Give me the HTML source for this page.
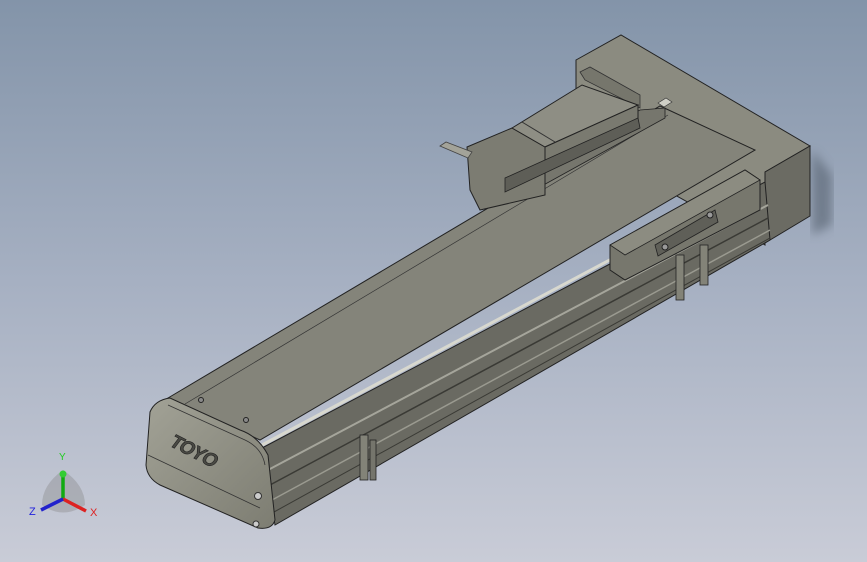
<!DOCTYPE html>
<html><head><meta charset="utf-8"><style>
html,body{margin:0;padding:0;width:867px;height:562px;overflow:hidden}
body{background:linear-gradient(to bottom,#8394a9 0%,#a6b0c2 50%,#c9ccd7 100%)}
svg{position:absolute;left:0;top:0}
</style></head><body>
<svg width="867" height="562" viewBox="0 0 867 562" font-family="Liberation Sans, sans-serif">
<defs>
<filter id="sh"><feGaussianBlur stdDeviation="5"/></filter>
<linearGradient id="cap" x1="0" y1="0" x2="1" y2="1"><stop offset="0" stop-color="#a2a296"/><stop offset="1" stop-color="#7d7d72"/></linearGradient>
</defs>
<polygon points="812,150 832,175 832,225 812,235" fill="#55606e" opacity="0.6" filter="url(#sh)"/>
<!-- back block -->
<polygon points="576,60 621,35 810,146 765,172 765,245 576,140" fill="#8b8b80" stroke="#222" stroke-width="1"/>
<polygon points="765,172 810,146 810,216 765,243" fill="#6b6b63" stroke="#222" stroke-width="1"/>
<polygon points="580,72 590,67 640,95 640,108 585,80" fill="#76766c" stroke="#333" stroke-width="0.8"/>
<polygon points="658,103 666,98 672,102 664,107" fill="#cfcfc6" stroke="#333" stroke-width="0.6"/>
<circle cx="685" cy="122" r="3" fill="#888" stroke="#222"/>
<circle cx="730" cy="145" r="3" fill="#888" stroke="#222"/>
<!-- main rail top face -->
<polygon points="168,398 660,106 755,150 260,440" fill="#84847a" stroke="#222" stroke-width="1"/>
<line x1="185" y1="404" x2="668" y2="115" stroke="#333" stroke-width="0.7"/>
<!-- motor strip -->
<polygon points="505,180 640,110 665,108 665,118 520,198 505,200" fill="#76766d" stroke="#222" stroke-width="0.8"/>
<!-- motor -->
<polygon points="467,147 512,128 545,147 545,195 480,210 470,190" fill="#7c7c72" stroke="#222" stroke-width="1"/>
<polygon points="512,128 582,85 638,105 545,147" fill="#8e8e84" stroke="#222" stroke-width="1"/>
<polygon points="545,147 638,105 638,125 545,172" fill="#7a7a70" stroke="#222" stroke-width="1"/>
<polygon points="505,178 638,118 640,128 505,192" fill="#5e5e57" stroke="#222" stroke-width="0.8"/>
<line x1="522" y1="122" x2="555" y2="142" stroke="#333"/>
<polygon points="440,146 446,142 472,152 468,158" fill="#a3a399" stroke="#444" stroke-width="0.8"/>
<!-- rod highlight -->
<line x1="262" y1="445" x2="760" y2="180" stroke="#d8d8cf" stroke-width="3"/>
<line x1="262" y1="449" x2="760" y2="184" stroke="#333" stroke-width="0.8"/>
<!-- side face -->
<polygon points="262,448 765,182 770,240 275,525" fill="#6a6a62" stroke="#222" stroke-width="1"/>
<line x1="268" y1="470" x2="768" y2="205" stroke="#a5a59b" stroke-width="2"/>
<line x1="270" y1="485" x2="768" y2="218" stroke="#3a3a35" stroke-width="1.5"/>
<line x1="272" y1="500" x2="770" y2="230" stroke="#9a9a90" stroke-width="1.5"/>
<line x1="274" y1="512" x2="770" y2="238" stroke="#3a3a35" stroke-width="1"/>
<!-- carriage -->
<polygon points="610,245 745,170 760,180 760,210 625,280 610,270" fill="#77776d" stroke="#222" stroke-width="1"/>
<polygon points="610,245 745,170 760,180 625,255" fill="#8c8c81" stroke="#222" stroke-width="0.8"/>
<polygon points="655,245 715,210 718,222 658,256" fill="#5f5f58" stroke="#222" stroke-width="0.8"/>
<circle cx="665" cy="247" r="3" fill="#999" stroke="#222"/>
<circle cx="710" cy="215" r="3" fill="#999" stroke="#222"/>
<rect x="676" y="255" width="8" height="45" fill="#838378" stroke="#222" stroke-width="0.8"/>
<rect x="700" y="245" width="8" height="40" fill="#838378" stroke="#222" stroke-width="0.8"/>
<rect x="360" y="435" width="8" height="45" fill="#838378" stroke="#222" stroke-width="0.8"/>
<rect x="370" y="440" width="6" height="40" fill="#75756c" stroke="#222" stroke-width="0.8"/>
<!-- front end cap -->
<path d="M150,412 Q155,400 170,398 L240,430 Q258,436 268,455 L275,520 Q272,530 258,528 L160,485 Q147,478 146,465 Z" fill="url(#cap)" stroke="#222" stroke-width="1"/>
<path d="M168,405 L245,440 Q262,448 265,465" fill="none" stroke="#333" stroke-width="0.8"/>
<path d="M148,455 L260,508" stroke="#333" stroke-width="0.8"/>
<text x="0" y="0" transform="translate(168,445) rotate(27) skewX(-10)" font-size="19" font-weight="bold" fill="#4a4a44" stroke="#222" stroke-width="0.6" letter-spacing="-1">TOYO</text>
<circle cx="258" cy="496" r="3.5" fill="#ccc" stroke="#333"/>
<circle cx="256" cy="524" r="3" fill="#ccc" stroke="#333"/>
<circle cx="201" cy="400" r="2.5" fill="#888" stroke="#222"/>
<circle cx="246" cy="420" r="2.5" fill="#888" stroke="#222"/>
<!-- triad -->
<path d="M63,470 Q85,485 85,505 Q63,520 42,505 Q42,485 63,470 Z" fill="#808080" opacity="0.35"/>
<line x1="63" y1="499" x2="63" y2="474" stroke="#1a1" stroke-width="3.5"/>
<circle cx="63" cy="474" r="3.5" fill="#3c3"/>
<line x1="63" y1="499" x2="86" y2="511" stroke="#d22" stroke-width="3.5"/>
<line x1="63" y1="499" x2="41" y2="510" stroke="#22c" stroke-width="3.5"/>
<text x="59" y="460" font-size="10" fill="#2c2">Y</text>
<text x="29" y="515" font-size="11" fill="#22d">Z</text>
<text x="90" y="516" font-size="11" fill="#d22">X</text>
</svg>
</body></html>
